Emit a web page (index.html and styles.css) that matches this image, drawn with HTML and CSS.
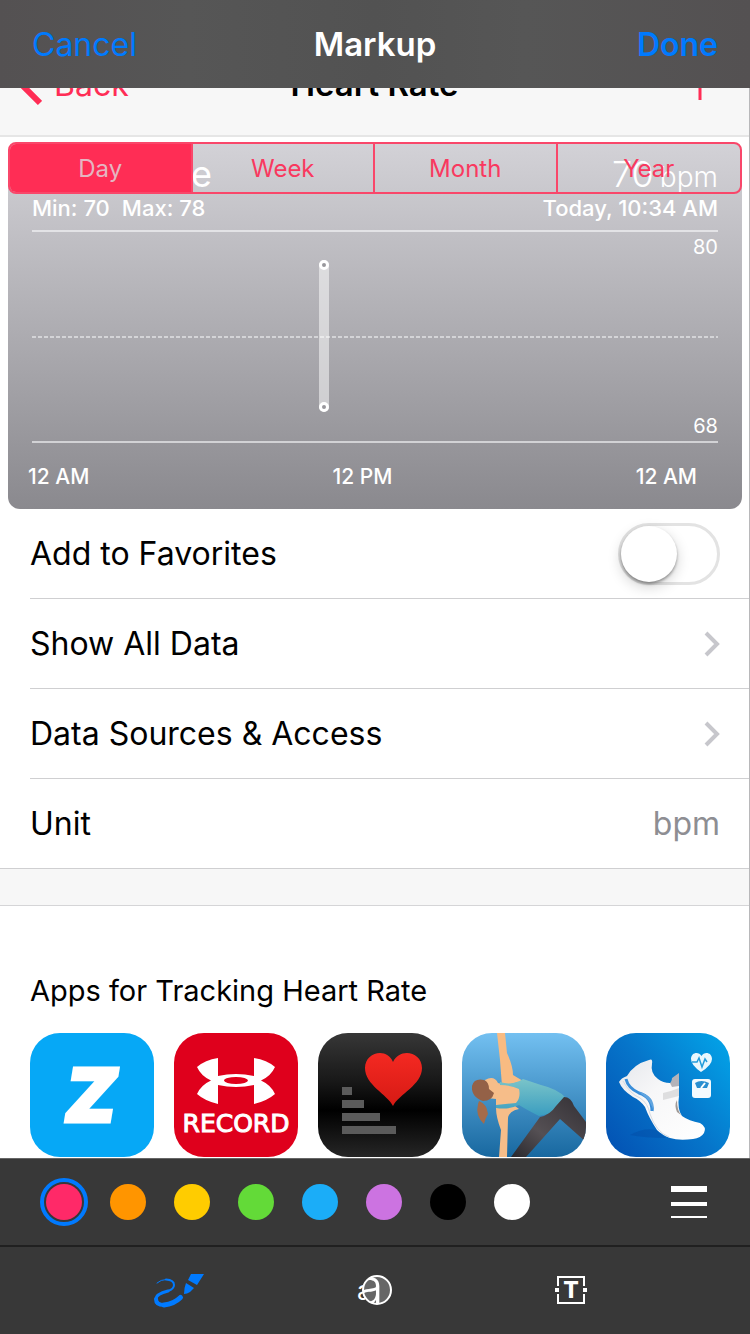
FILE: index.html
```html
<!DOCTYPE html>
<html lang="en">
<head>
<meta charset="utf-8">
<meta name="viewport" content="width=device-width, initial-scale=1">
<title>Markup</title>
<link rel="stylesheet" href="styles.css">
</head>
<body>
<header class="topbar">
  <button class="topbar-button" type="button">Cancel</button>
  <h1 class="topbar-title">Markup</h1>
  <button class="topbar-button topbar-done" type="button">Done</button>
</header>

<main class="canvas">
  <nav class="health-nav">
    <div class="health-nav-row">
      <a class="back" href="#">
        <svg width="24" height="44" viewBox="0 0 24 44" aria-hidden="true"><path d="M22 3 3 22 22 41" fill="none" stroke="currentColor" stroke-width="6"/></svg>
        <span>Back</span>
      </a>
      <h2 class="health-title">Heart Rate</h2>
      <button class="add" type="button" aria-label="Add data"><svg width="32" height="32" viewBox="0 0 32 32"><path d="M16 0V32M0 16H32" stroke="currentColor" stroke-width="3"/></svg></button>
    </div>
  </nav>

  <section class="chart-card">
    <div class="segments">
      <button class="segment segment-on" type="button">Day</button>
      <button class="segment" type="button">Week</button>
      <button class="segment" type="button">Month</button>
      <button class="segment" type="button">Year</button>
    </div>
    <div class="chart-head">
      <span class="chart-name">Heart Rate</span>
      <span class="chart-value"><span>70</span><span class="chart-unit">bpm</span></span>
    </div>
    <div class="chart-range"><span class="range-values"><span>Min: 70</span><span>Max: 78</span></span><span>Today, 10:34 AM</span></div>
    <div class="plot">
      <span>80</span>
      <div class="plot-mid"></div>
      <div class="plot-bar"></div>
      <span>68</span>
    </div>
    <div class="axis"><span>12 AM</span><span>12 PM</span><span>12 AM</span></div>
  </section>

  <section class="rows">
    <div class="row"><label for="favorite">Add to Favorites</label><input class="switch" id="favorite" type="checkbox" role="switch"></div>
    <a class="row" href="#"><span>Show All Data</span><svg width="16" height="26" viewBox="0 0 16 26" aria-hidden="true"><path d="M2 2 13 13 2 24" fill="none" stroke="#c7c7cc" stroke-width="4"/></svg></a>
    <a class="row" href="#"><span>Data Sources &amp; Access</span><svg width="16" height="26" viewBox="0 0 16 26" aria-hidden="true"><path d="M2 2 13 13 2 24" fill="none" stroke="#c7c7cc" stroke-width="4"/></svg></a>
    <div class="row"><span>Unit</span><span class="row-value">bpm</span></div>
  </section>
  <div class="divider"></div>

  <section class="apps">
    <h3 class="apps-title">Apps for Tracking Heart Rate</h3>
    <div class="app-list">
      <svg class="app" viewBox="0 0 124 124" role="img" aria-label="Zova">
        <rect width="124" height="124" fill="#06a8f6"/>
        <text class="logo-z" x="35" y="89">Z</text>
      </svg>
      <svg class="app" viewBox="0 0 124 124" role="img" aria-label="Record">
        <rect width="124" height="124" fill="#df001c"/>
        <path d="M44 25Q31 27 23 34Q27 43 37 47.500Q27 52 23 61Q31 68 44 71V52Q62 56 80 52V71Q93 68 101 61Q97 52 87 47.500Q97 43 101 34Q93 27 80 25V43Q62 39 44 43Z" fill="#fff"/>
        <ellipse cx="62" cy="47.500" rx="12" ry="3.500" fill="#df001c"/>
        <text class="logo-record" x="62" y="99">RECORD</text>
      </svg>
      <svg class="app" viewBox="0 0 124 124" role="img" aria-label="Heart rate log">
        <defs><linearGradient id="night" x2="0" y2="1"><stop stop-color="#373737"/><stop offset=".4" stop-color="#171717"/><stop offset=".62" stop-color="#000"/><stop offset="1" stop-color="#262626"/></linearGradient><linearGradient id="heart" x2="0" y2="1"><stop stop-color="#f42922"/><stop offset="1" stop-color="#d61a14"/></linearGradient></defs>
        <rect width="124" height="124" fill="url(#night)"/>
        <path d="M24 54H34V62H24ZM24 67H46V75H24ZM24 80H62V88H24ZM24 93H78V101H24Z" fill="#5b5b5b"/>
        <path d="M75 73C69 61 47 52 47 35C47 19 69 14 75 29C82 14 104 19 104 35C104 52 81 61 75 73Z" fill="url(#heart)"/>
      </svg>
      <svg class="app" viewBox="0 0 124 124" role="img" aria-label="Yoga">
        <defs><linearGradient id="sky" x2="0" y2="1"><stop stop-color="#73c0f1"/><stop offset="1" stop-color="#1868a0"/></linearGradient><linearGradient id="shirt" x2="0" y2="1"><stop stop-color="#7ac4c9"/><stop offset="1" stop-color="#3a9dc0"/></linearGradient><linearGradient id="legs" x1="1" x2="0" y2="1"><stop stop-color="#333035"/><stop offset=".6" stop-color="#555054"/><stop offset="1" stop-color="#29282d"/></linearGradient></defs>
        <rect width="124" height="124" fill="url(#sky)"/>
        <path d="M35 0H43L45 20Q51 33 51 42L61 48 40 53 38 27Z" fill="#f8bb82"/>
        <path d="M23 47Q32 42 36 50L43 52Q54 49 58 57Q60 68 53 73L57 76Q47 78 46 85L45 124H37L39 97Q34 84 34 75L34 66L25 65Z" fill="#f6bd89"/>
        <path d="M10 53Q12 45 22 47Q27 49 27 56L32 60Q30 68 21 68Q9 64 10 53Z" fill="#946147"/>
        <path d="M17 68Q25 71 26 81Q23 86 22 91Q13 83 16 71Z" fill="#a46b4a"/>
        <path d="M38 49Q50 53 61 46L79 52Q96 56 104 65L90 80 77 83Q65 77 57 72Q46 77 34 75V72L54 70Q59 64 57 56Q48 52 38 52Z" fill="url(#shirt)"/>
        <path d="M102 64Q109 64 112 73L124 89V109L98 86 64 124H49L78 84Q88 82 94 73Z" fill="url(#legs)"/>
      </svg>
      <svg class="app" viewBox="0 0 124 124" role="img" aria-label="Pacer">
        <defs><linearGradient id="track" x1="1" y1=".1" x2="0" y2=".9"><stop stop-color="#03a2e7"/><stop offset=".5" stop-color="#0675ca"/><stop offset="1" stop-color="#0353b4"/></linearGradient><linearGradient id="shoe" x2="1" y2="1"><stop stop-color="#e5e7ec"/><stop offset=".4" stop-color="#f7f7f8"/><stop offset="1" stop-color="#fff"/></linearGradient></defs>
        <rect width="124" height="124" fill="url(#track)"/>
        <path d="M24 102Q38 94 50 97L60 105Q39 105 24 102Z" fill="#03459e" opacity=".35"/>
        <path d="M61 52Q66 50 66 45L73 40V56L62 58Z" fill="#b4b3b9"/>
        <path d="M13 49Q15 45 21 43Q28 31 43 27Q47 25 46 31Q44 40 52 46Q57 50 64 50L66 54 73 53 73 63Q71 76 76 83Q83 88 94 90Q101 94 98 100Q95 105 87 106Q73 108 64 105Q56 102 51 97Q43 85 39 74Q34 67 27 64Q16 57 13 49Z" fill="url(#shoe)"/>
        <path d="M57 60Q66 58 73 55V63Q65 65 57 67Z" fill="#dededf"/>
        <path d="M71 67Q71 77 75 82L71 79Q68 72 71 67Z" fill="#a09996"/>
        <path d="M20 46Q22 55 33 60Q46 64 46 78" fill="none" stroke="#398eda" stroke-width="3"/>
        <path d="M33 59Q49 62 48 79Q45 69 39 64Z" fill="#61a5e0"/>
        <path d="M17 48Q24 61 34 65Q42 70 44 81Q50 99 63 104" fill="none" stroke="#d5dae1"/>
        <path d="M95 39Q85 32 85 26C85 19 93 18 95.500 23C98 18 106 19 106 26Q106 32 95 39Z" fill="#e9f7fd"/>
        <path d="M86 29H91L93 25 96 34 99 26 101 29" fill="none" stroke="#239cdb" stroke-width="1.500"/>
        <rect x="86" y="46" width="19" height="19" rx="3" fill="#f3fafe"/>
        <path d="M89 50Q95 46 103 50L101 55H91Z" fill="#2a8fd0"/>
        <path d="M95 55 99 50" stroke="#fff" stroke-width="2"/>
      </svg>
    </div>
  </section>
</main>

<footer class="toolbar">
  <div class="palette">
    <div class="swatches" role="radiogroup" aria-label="Color">
      <input class="swatch pink" type="radio" name="color" aria-label="Pink" checked>
      <input class="swatch orange" type="radio" name="color" aria-label="Orange">
      <input class="swatch yellow" type="radio" name="color" aria-label="Yellow">
      <input class="swatch green" type="radio" name="color" aria-label="Green">
      <input class="swatch blue" type="radio" name="color" aria-label="Blue">
      <input class="swatch purple" type="radio" name="color" aria-label="Purple">
      <input class="swatch black" type="radio" name="color" aria-label="Black">
      <input class="swatch white" type="radio" name="color" aria-label="White">
    </div>
    <button class="icon-button" type="button" aria-label="Line thickness"><svg width="36" height="32" viewBox="0 0 36 32"><path d="M0 0H36V6H0ZM0 16H36V20H0ZM0 30H36V32H0Z" fill="#fff"/></svg></button>
  </div>
  <div class="tools">
    <button class="icon-button" type="button" aria-label="Draw"><svg width="52" height="36" viewBox="0 0 52 36">
      <g fill="none" stroke="#007aff" stroke-linecap="round">
        <path d="M4 11Q8 7.500 13 7.500" stroke-width="1"/>
        <path d="M13 7.500Q21 8 21 13Q21 17 15 19" stroke-width="2"/>
        <path d="M15 19Q3 22 3 27" stroke-width="3"/>
        <path d="M3 27Q3 33 11 33" stroke-width="4"/>
        <path d="M11 33Q21 32 27.500 25.500" stroke-width="5"/>
      </g>
      <path d="M38 2H51L44 13 35 8ZM33 11 41 16 37 20Q34 22 31 22Q31 16 33 11Z" fill="#007aff"/></svg></button>
    <button class="icon-button" type="button" aria-label="Magnifier"><svg width="38" height="36" viewBox="0 0 38 36">
      <defs><clipPath id="lens"><circle cx="21" cy="18" r="14"/></clipPath><clipPath id="outside"><path d="M0 0H12L7 18 12 36H0Z"/></clipPath></defs>
      <g clip-path="url(#outside)"><text class="small-a" x="1" y="28">a</text></g>
      <circle cx="21" cy="18" r="14" fill="#666"/>
      <g clip-path="url(#lens)"><text class="large-a" x="0" y="32">a</text></g>
      <circle cx="21" cy="18" r="14" fill="none" stroke="#fff" stroke-width="2"/></svg></button>
    <button class="icon-button" type="button" aria-label="Text"><svg width="32" height="28" viewBox="0 0 32 28">
      <path d="M3 10V1H29V10M3 18V27H29V18" fill="none" stroke="#fff" stroke-width="2"/><path d="M0 12H4V16H0ZM28 12H32V16H28Z" fill="#fff"/>
      <text class="tool-t" x="16" y="22">T</text></svg></button>
  </div>
</footer>
</body>
</html>
```
FILE: styles.css
```css
* { box-sizing: border-box; }

body {
  margin: 0;
  min-height: 100vh;
  display: flex;
  flex-direction: column;
  font-family: Inter, "Liberation Sans", sans-serif;
  color: #000;
  background: #fff;
}

h1, h2, h3 { margin: 0; }
a { color: inherit; text-decoration: none; }
button { font: inherit; border: 0; padding: 0; background: none; cursor: pointer; }
svg { display: block; }

.topbar {
  height: 88px;
  padding: 0 32px;
  display: grid;
  grid-template-columns: 1fr auto 1fr;
  align-items: center;
  font-size: 32px;
  background: linear-gradient(90deg, #545152, #565656 25%, #525252 50%, #565656 70%, #545152);
}
.topbar-button { color: #007aff; justify-self: start; }
.topbar-done { justify-self: end; font-weight: 600; }
.topbar-title { font-size: 33px; font-weight: 600; color: #fff; }

.canvas { flex: 1; padding-bottom: 1px; border-right: 1px solid #b8b8ba; }

.health-nav {
  height: 49px;
  overflow: hidden;
  background: #f7f7f7;
  border-bottom: 2px solid #e6e6e6;
}
.health-nav-row {
  height: 44px;
  margin-top: -26px;
  padding: 0 18px;
  display: grid;
  grid-template-columns: 1fr auto 1fr;
  column-gap: 16px;
  align-items: center;
  font-size: 32px;
}
.back { display: flex; align-items: center; gap: 12px; color: #ff2d55; }
.health-title { font-size: 33px; font-weight: 600; }
.add { justify-self: end; margin-right: 15px; color: #ff2d55; }

.chart-card {
  position: relative;
  margin: 5px 7px 0 8px;
  height: 367px;
  border-radius: 12px;
  color: #fff;
  background: linear-gradient(#d3d2d7, #8a898e);
}
.segments {
  position: absolute;
  inset: 0 0 auto;
  height: 52px;
  display: grid;
  grid-template-columns: repeat(4, 1fr);
  border: 2px solid #f9476a;
  border-radius: 8px;
  overflow: hidden;
}
.segment { font-size: 24px; color: #f9395f; border-right: 2px solid #f9476a; }
.segment-on { background: #ff2d55; color: #e5b5c1; }
.segment:last-child { border-right: 0; }

.chart-head {
  height: 52px;
  padding: 6px 24px 0;
  display: flex;
  justify-content: space-between;
  align-items: baseline;
  line-height: 52px;
}
.chart-name { font-size: 36px; }
.chart-value { display: flex; align-items: baseline; gap: 6px; font-size: 36px; font-weight: 300; }
.chart-unit { font-size: 28px; }
.chart-range {
  padding: 0 24px;
  height: 36px;
  display: flex;
  justify-content: space-between;
  font-size: 22px;
  font-weight: 500;
  line-height: 29px;
}
.range-values { display: flex; gap: 12px; }
.plot {
  position: relative;
  height: 213px;
  margin: 0 24px;
  padding: 3px 0;
  display: flex;
  flex-direction: column;
  justify-content: space-between;
  align-items: flex-end;
  border-top: 2px solid #e3e3e6;
  border-bottom: 2px solid #d2d2d5;
  font-size: 20px;
  line-height: 24px;
}
.plot-mid { width: 100%; height: 2px; background: repeating-linear-gradient(90deg, #d4d4d7 0 4px, transparent 4px 6px); }
.plot-bar {
  position: absolute;
  left: 42%;
  top: 28px;
  bottom: 29px;
  width: 10px;
  margin-left: -1px;
  border-radius: 5px;
  background: rgba(255, 255, 255, .5);
}
.plot-bar::before, .plot-bar::after {
  content: "";
  box-sizing: border-box;
  position: absolute;
  left: 0;
  width: 10px;
  height: 10px;
  border: 3px solid #fff;
  border-radius: 50%;
  background: #98979c;
}
.plot-bar::before { top: 0; }
.plot-bar::after { bottom: 0; }
.axis {
  padding: 0 45px 0 20px;
  display: flex;
  justify-content: space-between;
  font-size: 21px;
  font-weight: 500;
  line-height: 68px;
}

.rows { border-bottom: 1px solid #cfcfd1; }
.row {
  height: 90px;
  margin-left: 30px;
  padding-right: 29px;
  display: flex;
  align-items: center;
  justify-content: space-between;
  font-size: 32px;
  border-bottom: 1px solid #cfcfd1;
}
.row:last-child { height: 89px; border-bottom: 0; }
.row-value { color: #8e8e93; }
.switch {
  appearance: none;
  margin: 0;
  width: 102px;
  height: 62px;
  border: 3px solid #e3e3e3;
  border-radius: 31px;
}
.switch::before {
  content: "";
  display: block;
  width: 56px;
  height: 56px;
  border-radius: 50%;
  background: #fff;
  box-shadow: 0 2px 3px rgba(0, 0, 0, .35), 0 5px 14px rgba(0, 0, 0, .18);
}
.switch:checked { background: #4cd964; }
.switch:checked::before { margin-left: 40px; }
.divider { height: 37px; background: #f7f7f7; border-bottom: 1px solid #d5d5d7; }

.apps { padding: 67px 0 0 30px; }
.apps-title { font-size: 29px; font-weight: 400; line-height: 36px; }
.app-list { margin-top: 24px; display: flex; gap: 20px; }
.app { width: 124px; height: 124px; flex: none; border-radius: 30px; }
.logo-z { font: italic 900 74px Inter, sans-serif; fill: #fff; stroke: #fff; stroke-width: 3px; }
.logo-record { font: 400 25px "DejaVu Sans", sans-serif; fill: #fff; stroke: #fff; stroke-width: 1px; text-anchor: middle; }

.toolbar { background: #383838; border-top: 1px solid #666; }
.palette {
  height: 88px;
  padding: 0 43px 0 46px;
  display: flex;
  align-items: center;
  justify-content: space-between;
  border-bottom: 2px solid #202020;
}
.swatches { display: flex; gap: 28px; }
.swatch { appearance: none; margin: 0; width: 36px; height: 36px; border-radius: 50%; }
.swatch:checked { outline: 4px solid #007aff; outline-offset: 2px; }
.pink { background: #ff2968; }
.orange { background: #ff9500; }
.yellow { background: #ffcc00; }
.green { background: #63da38; }
.blue { background: #1badf8; }
.purple { background: #cc73e1; }
.black { background: #000; }
.white { background: #fff; }
.tools {
  height: 87px;
  padding: 0 81px 2px;
  display: grid;
  grid-template-columns: repeat(3, 1fr);
  align-items: center;
  justify-items: center;
}
.small-a { font: 400 26px Inter, sans-serif; fill: #fff; }
.large-a { font: 300 50px Inter, sans-serif; fill: #fff; }
.tool-t { font: 800 23px Inter, sans-serif; fill: #fff; text-anchor: middle; }
```
